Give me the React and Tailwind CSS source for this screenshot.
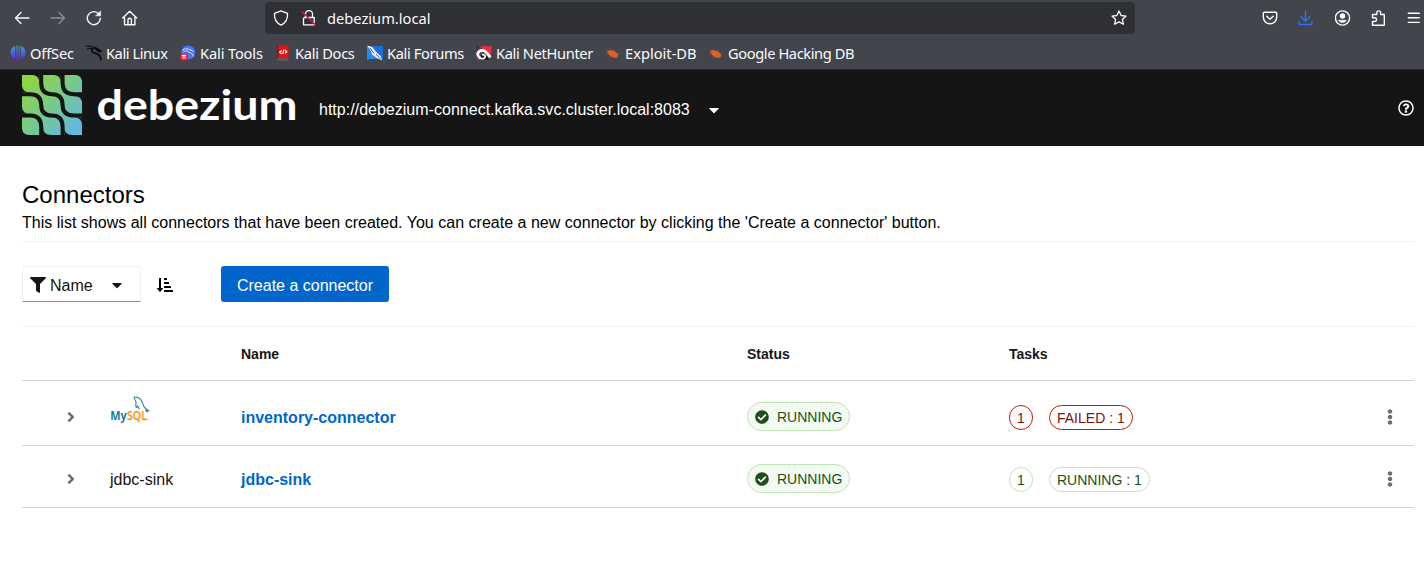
import React from 'react';
import {
  FaFilter, FaCaretDown, FaSortAmountDownAlt, FaAngleRight, FaCheckCircle, FaEllipsisV, FaRegQuestionCircle,
} from 'react-icons/fa';

const stroke = { fill: 'none', stroke: '#fbfbfe', strokeWidth: 1.4, strokeLinecap: 'round', strokeLinejoin: 'round' };

function Icon({ children, className = '' }) {
  return (
    <svg viewBox="0 0 16 16" className={`size-4 shrink-0 ${className}`} {...stroke}>
      {children}
    </svg>
  );
}

function OffSecIcon() {
  return (
    <svg viewBox="0 0 16 16" className="size-4 shrink-0">
      <defs>
        <linearGradient id="off" gradientUnits="userSpaceOnUse" x1="0" y1="0" x2="0" y2="16">
          <stop offset="0" stopColor="#45a3bd" />
          <stop offset=".5" stopColor="#4a63dc" />
          <stop offset="1" stopColor="#6a1fc4" />
        </linearGradient>
      </defs>
      <path d="M5.200 1v13C2.500 13 .5 11 .5 7.500S2.500 2 5.200 1zM10.800 1v13c3-1 4.700-3 4.700-6.500S13.500 2 10.800 1zM6.300 .8h1.200v15H6.300zM8.500 .8h1.200v15H8.500z" fill="url(#off)" />
    </svg>
  );
}

function KaliIcon() {
  return (
    <svg viewBox="0 0 16 16" className="size-4 shrink-0" fill="none" stroke="#08090b">
      <path d="M0 1.200C4 .8 8 1.500 11 3.600M1 4c3-1.200 6-1 9 .2" strokeWidth="1" />
      <path d="M6 3.200C5 6 6.500 8 9.500 8.300c3 .3 5 2.500 5.500 7" strokeWidth="1.700" />
      <path d="M8 2.500c2 0 3.500 1 4.500 2l2.500 1.300-.3.900-2.700-.5-1.500-1.200" strokeWidth="1.200" fill="#08090b" />
    </svg>
  );
}

function ToolsIcon() {
  return (
    <svg viewBox="0 0 16 16" className="size-4 shrink-0">
      <circle cx="8.200" cy="7.500" r="7" fill="#4b74f5" />
      <path d="M2.500 5c3-1.800 6-1.500 9 .5M3 7.500C5 5.500 8 5.500 9 7.500c2.500 0 4 2 4.500 4M10 4.500l3.500 2" fill="none" stroke="#cfdcff" strokeWidth="1" />
      <circle cx="4" cy="11.800" r="4" fill="#e8232f" />
      <path d="M1.800 10.300h4.400M3 10.300v3.500M5 10.300v3.500" stroke="#fff" strokeWidth="1" />
    </svg>
  );
}

function DocsIcon() {
  return (
    <svg viewBox="0 0 16 16" className="size-4 shrink-0">
      <path d="M2 .500h11.500v13H2z" fill="#df1519" />
      <path d="M2 .500h1.300v15H2z" fill="#8a1218" />
      <path d="M2 13.500h11.500v2H2z" fill="#58606e" />
      <path d="M6.500 5.500L4.700 7.200l1.800 1.700M10 5l1.800 1.700L10 8.400M8.800 4.500L7.700 9.200" fill="none" stroke="#fff" strokeWidth="1.100" />
    </svg>
  );
}

function ForumsIcon() {
  return (
    <svg viewBox="0 0 16 16" className="size-4 shrink-0">
      <path d="M0 1.500h16V14H2l-2 1.500z" fill="#2389f5" />
      <path d="M6 1.500h10V14z" fill="#1c6fe0" />
      <path d="M0 .500l5 1.500 4 5 4.500 4 1.500 4.500-5-2.500-5-3.500L4 6z" fill="#f5f5f5" />
      <path d="M3 3l4 5.500M9 9l4.500 5" stroke="#31363e" strokeWidth=".8" />
    </svg>
  );
}

function NetHunterIcon() {
  return (
    <svg viewBox="0 0 16 16" className="size-4 shrink-0">
      <path d="M4 1.500L15.700 1l-1 11z" fill="#f22c3b" />
      <path d="M5 9h4l4 5.500H5z" fill="#141418" />
      <path d="M4.200 13.200C-.2 10.500 1.800 5.300 6.300 5.300c3.500 0 5.200 3.400 8 7.200" fill="none" stroke="#fff" strokeWidth="2.800" />
      <path d="M3.500 12.800c2.500 1.700 5.700.8 5.700-1.200 0-1.300-1.400-2.200-3.400-1.900" fill="none" stroke="#fff" strokeWidth="1.800" />
      <path d="M.8 11.500l1.500 3" stroke="#e32434" strokeWidth="1.300" />
      <path d="M.5 1.500l2 1M1 5l1-1" stroke="#141418" strokeWidth="1" />
    </svg>
  );
}

function BugIcon() {
  return (
    <svg viewBox="0 0 16 16" className="size-4 shrink-0">
      <path d="M2 6.600C4 4.500 7 4.800 10 6.600l3 2.500 .3 2.500-2.300 1.200C7.500 13 4 11.300 2 6.600z" fill="#e2602a" />
      <path d="M.8 4.500l3 1.500M5 3.500l2 2M9.500 4.100l.5 3M15 7.800l-3 1.500M1 9.300l3-.5M4 12.300l2-1M12 13.600l-1-2" stroke="#a95336" strokeWidth=".7" />
    </svg>
  );
}

const bookmarks = [
  { label: 'OffSec', icon: OffSecIcon, width: 'w-[76px]', tracking: 'tracking-[-0.15px]' },
  { label: 'Kali Linux', icon: KaliIcon, width: 'w-[94px]', tracking: 'tracking-[-0.45px]' },
  { label: 'Kali Tools', icon: ToolsIcon, width: 'w-[95px]', tracking: 'tracking-[-0.15px]' },
  { label: 'Kali Docs', icon: DocsIcon, width: 'w-[92px]', tracking: 'tracking-[-0.3px]' },
  { label: 'Kali Forums', icon: ForumsIcon, width: 'w-[109px]', tracking: 'tracking-[-0.36px]' },
  { label: 'Kali NetHunter', icon: NetHunterIcon, width: 'w-[129px]', tracking: 'tracking-[-0.36px]' },
  { label: 'Exploit-DB', icon: BugIcon, width: 'w-[103px]', tracking: 'tracking-normal' },
  { label: 'Google Hacking DB', icon: BugIcon, width: 'w-[160px]', tracking: 'tracking-[-0.41px]' },
];

function Browser() {
  return (
    <div className="h-[70px] bg-[#42454c] font-['Noto_Sans',sans-serif] text-[14.67px] text-[#fbfbfe]">
      <div className="flex h-9 items-center pl-[14px]">
        <div className="flex w-[251px] items-center gap-5">
          <Icon><path d="M15 8H1.500M7 2.500L1.500 8 7 13.500" /></Icon>
          <Icon className="opacity-40"><path d="M1 8h13.500M9 2.500L14.500 8 9 13.500" /></Icon>
          <Icon><path d="M14.300 8.200A6.500 6.500 0 1 1 12.800 4" /><path d="M14.600 1.200v4.600h-4.600z" fill="#fbfbfe" strokeWidth=".6" /></Icon>
          <Icon><path d="M.7 8l7-6.700L14.700 8M2.500 7v7.700h10.400V7M6 14v-4a1.700 1.700 0 0 1 3.400 0v4" /></Icon>
        </div>
        <div className="flex h-8 w-[870px] items-center rounded bg-[#2f3035] pr-2 pl-2">
          <Icon><path d="M8 .8l6.500 2.500C15 9 12.500 13 8 15.200 3.500 13 1 9 1.500 3.300z" strokeWidth="1.300" /></Icon>
          <svg viewBox="0 0 16 16" className="ml-3 size-4" {...stroke}>
            <path d="M4.500 7.500V4a3.500 3.500 0 0 1 7 0v3.500M3.500 7.500h9.700v7.300H2.500V8.500z" strokeWidth="1.300" />
            <path d="M1.200 1.800l13 13" stroke="#e2104e" strokeWidth="1.500" />
          </svg>
          <span className="ml-[10px] flex-1">debezium.local</span>
          <Icon><path d="M8 1l2.100 4.500 4.900.6-3.600 3.300 1 4.900L8 11.900l-4.400 2.400 1-4.900L1 6.100l4.900-.6z" strokeWidth="1.300" /></Icon>
        </div>
        <div className="flex flex-1 items-center pl-[127px]">
          <Icon><path d="M2.300 2.200h11.400c.6 0 1 .4 1 1V7c0 4-3 6.800-6.700 6.800S1.300 11 1.300 7V3.200c0-.6.4-1 1-1zM4.800 6.200L8 9.200l3.200-3" /></Icon>
          <Icon className="ml-5"><path stroke="#2b76f5" d="M7.500 .8v10M3 6.800l4.500 4.400L12 6.800M1 12v1c0 .9.700 1.500 1.500 1.500h10c.9 0 1.500-.6 1.500-1.500v-1" /></Icon>
          <Icon className="ml-5 translate-x-px">
            <circle cx="7.500" cy="8" r="7.100" />
            <circle cx="7.500" cy="6" r="2" fill="#fbfbfe" />
            <path d="M3.800 10.300h7.400c-.7 1.600-2.100 2.300-3.700 2.300s-3-.7-3.700-2.300z" fill="#fbfbfe" strokeWidth=".6" />
          </Icon>
          <Icon className="ml-5"><path d="M2.500 15.200v-3.700h2.200a1.900 1.900 0 0 0 0-3.800H2.500V4.500h4.300V2.800a1.900 1.900 0 0 1 3.800 0v1.700h3.700v10.700z" /></Icon>
          <Icon className="ml-5"><path d="M2.300 3.200h11M2.300 7.800h11M2.300 12.400h11" /></Icon>
        </div>
      </div>
      <div className="flex h-[34px] items-center border-b border-[#25262c] pt-px pl-[10px]">
        {bookmarks.map(({ label, icon: Glyph, width, tracking }) => (
          <div key={label} className={`flex shrink-0 items-center gap-1 whitespace-nowrap ${width}`}>
            <Glyph />
            <span className={tracking}>{label}</span>
          </div>
        ))}
      </div>
    </div>
  );
}

const cells = [0, 1, 2].flatMap((r) => [0, 1, 2].map((c) => ({ r, c })));
const starts = [0, 21.2, 42.5];
const ends = [17.2, 38.700, 60];

function Logo() {
  return (
    <svg viewBox="0 0 276 62" className="h-[62px] w-[276px] shrink-0">
      <defs>
        <linearGradient id="brand" x1="0" y1="0" x2="1" y2="1">
          <stop offset=".1" stopColor="#91d443" />
          <stop offset=".5" stopColor="#77c98b" />
          <stop offset=".9" stopColor="#63b8df" />
        </linearGradient>
      </defs>
      <path d="M0 0h60v60H0z" fill="url(#brand)" />
      <g fill="none" stroke="#151515" strokeWidth="4">
        <path d="M19.200 0V8C19.200 16 23 19.200 30 19.200S40.600 23 40.600 30 44 40.600 52 40.600H60" />
        <path d="M40.600 0V8C40.600 15 44 19.200 52 19.200H60" />
        <path d="M0 19.200H8C16 19.200 19.200 23 19.200 30S23 40.600 30 40.600 40.600 44 40.600 52V60" />
        <path d="M0 40.600H8C15 40.600 19.200 44 19.200 52V60" />
      </g>
      <g fill="#151515">
        {cells.filter(({ r, c }) => r === 0 || c === 2).map(({ r, c }) => (
          <path key={`t${r}${c}`} d={`M${ends[c] + .1} ${starts[r] - .1}h-8q8 0 8 8z`} />
        ))}
        {cells.filter(({ r, c }) => c === 0 || r === 2).map(({ r, c }) => (
          <path key={`b${r}${c}`} d={`M${starts[c] - .1} ${ends[r] + .1}v-8q0 8 8 8z`} />
        ))}
      </g>
      <text x="74.500" y="45" fontSize="42.500" fontWeight="700" fill="#fff" fontFamily="Lato" textLength="201" lengthAdjust="spacingAndGlyphs">debezium</text>
    </svg>
  );
}

function MySqlLogo() {
  return (
    <svg viewBox="0 0 40 28" className="h-7 w-10">
      <path d="M24 1.200c3-.8 6.500 1 8 4.300 1 3 1.500 5.500 3.500 7l3 2.200-2.500-.2 1.500 1.800M24 1.200c.2 2 1.800 3 2 5 .2 2-.7 3.700.4 5.200l1.300-1.300 1.800 3" fill="none" stroke="#2b8198" strokeWidth="1.100" />
      <text x=".3" y="24" fontSize="12.500" fontWeight="700" fill="#13809a" fontFamily="Open Sans" textLength="16.500" lengthAdjust="spacingAndGlyphs">My</text>
      <text x="17" y="24" fontSize="12.500" fontWeight="600" fill="#f79a1c" stroke="#f79a1c" strokeWidth=".3" fontFamily="Open Sans" textLength="20" lengthAdjust="spacingAndGlyphs">SQL</text>
      <path d="M38 23h1v1h-1z" fill="#f79a1c" />
    </svg>
  );
}

const columns = 'grid grid-cols-[88px_131px_506px_262px_1fr] border-b border-[#d2d2d2]';

const connectors = [
  { name: 'inventory-connector', logo: true, task: 'FAILED : 1', failed: true },
  { name: 'jdbc-sink', logo: false, task: 'RUNNING : 1', failed: false },
];

function Row({ name, logo, task, failed }) {
  const tone = failed ? 'border-[#c9190b] text-[#7d1007]' : 'border-[#bde5b8] text-[#1e4f18]';
  return (
    <div className={`${columns} items-center ${logo ? 'h-[65px] pt-[7px]' : 'h-[62px] pt-1'}`}>
      <FaAngleRight className="mt-px ml-[41px] size-4 text-[#6a6e73]" />
      <div className="pt-[3px]">{logo ? <div className="-mt-4"><MySqlLogo /></div> : 'jdbc-sink'}</div>
      <a className="pt-[3px] font-bold text-[#06c]">{name}</a>
      <div>
        <span className="flex h-[29px] w-[103px] items-center gap-2 rounded-full border border-[#bde5b8] bg-[#f3faf2] pl-[7px] text-sm text-[#1e4f18]">
          <FaCheckCircle className="size-[14px]" />
          RUNNING
        </span>
      </div>
      <div className="flex items-center pt-0.5 text-sm">
        <span className={`flex h-[25px] w-6 items-center justify-center rounded-full border ${tone}`}>1</span>
        <span className={`ml-4 flex h-[25px] items-center rounded-full border px-[7px] ${tone}`}>{task}</span>
        <FaEllipsisV className="mr-4 mb-px ml-auto size-4 text-[#6a6e73]" />
      </div>
    </div>
  );
}

export default function App() {
  return (
    <div className="h-[581px] w-[1424px] overflow-hidden bg-white font-['Liberation_Sans',Arial,sans-serif] text-base text-[#151515]">
      <Browser />
      <header className="flex h-[76px] items-start bg-[#151515] pt-[5px] pl-[22px] text-white">
        <Logo />
        <div className="ml-[21px] flex h-[70px] items-center">
          <span className="w-[371px] whitespace-nowrap tracking-[0.015px]">http://debezium-connect.kafka.svc.cluster.local:8083</span>
          <FaCaretDown className="mb-px ml-4 size-4" />
        </div>
        <FaRegQuestionCircle className="mt-[25px] mr-[10px] ml-auto size-4" />
      </header>
      <main className="pr-[10px] pl-[22px]">
        <section className="h-24 border-b border-[#f0f0f0] pt-[33px] text-black">
          <h1 className="text-2xl leading-8">Connectors</h1>
          <p className="leading-6 tracking-[0.015px]">This list shows all connectors that have been created. You can create a new connector by clicking the 'Create a connector' button.</p>
        </section>
        <div className="flex h-[85px] items-start border-b border-[#f0f0f0] pt-6">
          <button className="flex h-9 w-[119px] items-center border border-b border-[#f0f0f0] border-b-[#8a8d90] pl-[7px]">
            <FaFilter className="mt-px size-4" />
            <span className="ml-1 pt-[3px]">Name</span>
            <FaCaretDown className="mt-px ml-4 size-4" />
          </button>
          <FaSortAmountDownAlt className="mt-[11px] ml-4 size-4 text-black" />
          <button className="ml-12 h-9 w-[168px] rounded-[3px] bg-[#06c] pt-[3px] text-white">Create a connector</button>
        </div>
        <div className={`${columns} h-[54px] items-center text-sm font-bold`}>
          <span className="col-start-3">Name</span>
          <span>Status</span>
          <span>Tasks</span>
        </div>
        {connectors.map((c) => <Row key={c.name} {...c} />)}
      </main>
    </div>
  );
}
